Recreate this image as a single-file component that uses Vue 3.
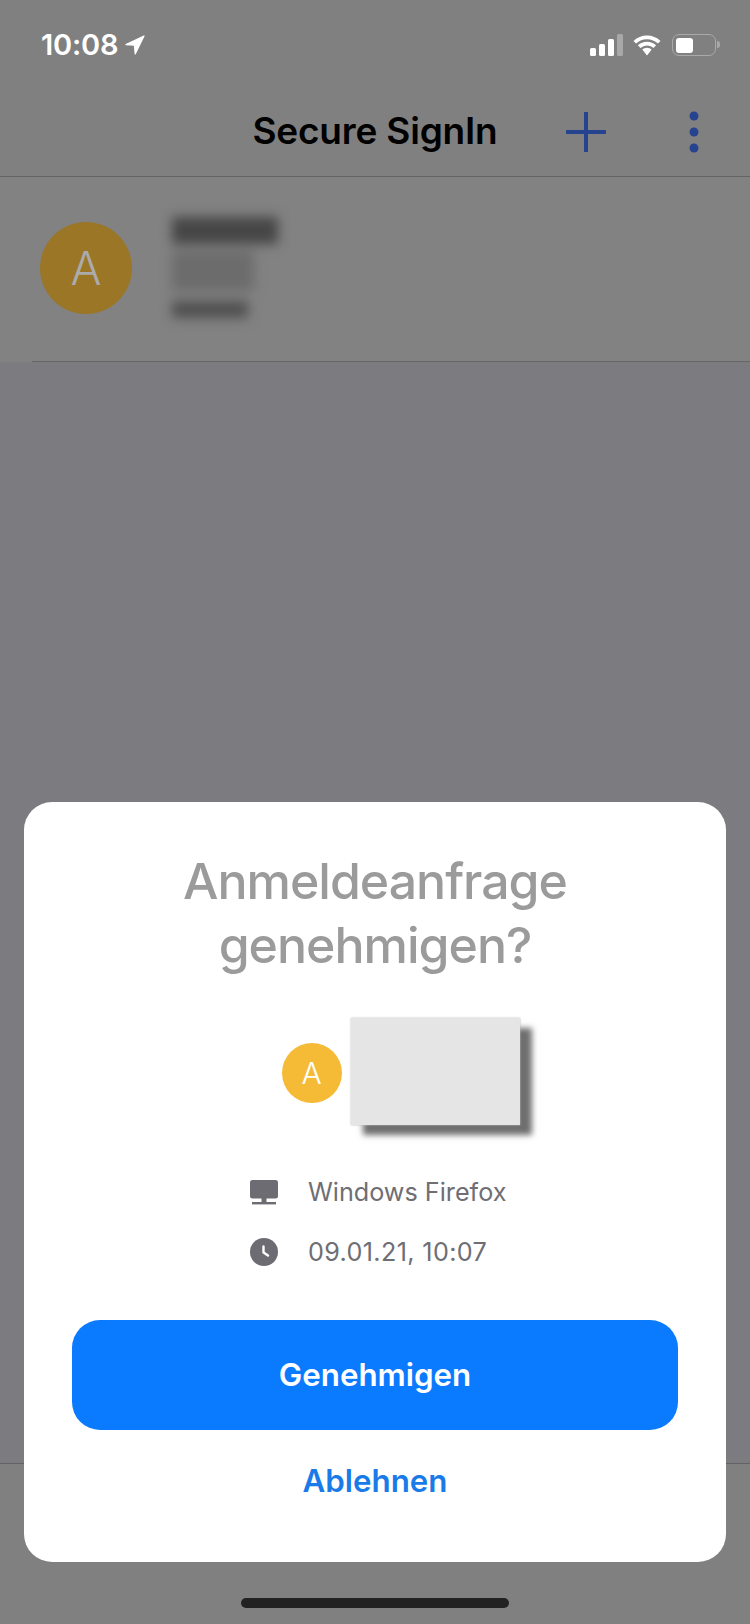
<template>
  <div class="screen">
    <div class="status-bar">
      <div class="time-wrap">
        <span class="time">10:08</span>
        <svg class="loc" viewBox="0 0 20 20" width="20" height="20">
          <path d="M19 1 1 9.6l8.4.6.8 8.8z" fill="#fff" stroke="#fff" stroke-width="1.2" stroke-linejoin="round"/>
        </svg>
      </div>
      <div class="status-icons">
        <svg viewBox="0 0 34 22" width="34" height="22">
          <rect x="0" y="14" width="6" height="8" rx="1.5" fill="#fff"/>
          <rect x="9" y="10" width="6" height="12" rx="1.5" fill="#fff"/>
          <rect x="18" y="5" width="6" height="17" rx="1.5" fill="#fff"/>
          <rect x="27" y="0" width="6" height="22" rx="1.5" fill="#a8a8a8"/>
        </svg>
        <svg viewBox="0 0 30 21" width="30" height="21">
          <path d="M15 4.2c4.2 0 8 1.6 10.9 4.3L28.5 6A19.4 19.4 0 0 0 15 .5 19.4 19.4 0 0 0 1.5 6l2.6 2.5A15.8 15.8 0 0 1 15 4.2z" fill="#fff"/>
          <path d="M15 10.4c2.5 0 4.8 1 6.5 2.5l2.6-2.6A13.2 13.2 0 0 0 15 6.7c-3.5 0-6.7 1.4-9.1 3.6l2.6 2.6a9.6 9.6 0 0 1 6.5-2.5z" fill="#fff"/>
          <path d="M15 12.8c-1.8 0-3.4.7-4.7 1.8L15 20.5l4.7-5.9a7 7 0 0 0-4.7-1.8z" fill="#fff"/>
        </svg>
        <div class="battery">
          <div class="battery-fill"></div>
          <div class="battery-nub"></div>
        </div>
      </div>
    </div>

    <header class="nav">
      <h1 class="nav-title">Secure SignIn</h1>
      <div class="nav-actions">
        <svg viewBox="0 0 40 40" width="40" height="40">
          <path d="M20 1v38M1 20h38" stroke="#26438f" stroke-width="4" stroke-linecap="round" fill="none"/>
        </svg>
        <svg viewBox="0 0 10 42" width="10" height="42">
          <circle cx="5" cy="5" r="4.5" fill="#26438f"/>
          <circle cx="5" cy="21" r="4.5" fill="#26438f"/>
          <circle cx="5" cy="37" r="4.5" fill="#26438f"/>
        </svg>
      </div>
    </header>

    <div class="account">
      <div class="avatar">A</div>
      <div class="blurred">
        <div class="blur-a"></div>
        <div class="blur-b"></div>
        <div class="blur-c"></div>
      </div>
    </div>

    <div class="empty"></div>
    <div class="tabbar"></div>

    <div class="dialog">
      <h2 class="dialog-title">Anmeldeanfrage<br />genehmigen?</h2>

      <div class="who">
        <div class="who-avatar">A</div>
        <div class="who-card"></div>
      </div>

      <div class="meta">
        <div class="meta-row">
          <svg viewBox="0 0 28 25" width="28" height="25">
            <path d="M2.5 0h23A2.5 2.5 0 0 1 28 2.5V16a2.5 2.5 0 0 1-2.5 2.5h-23A2.5 2.5 0 0 1 0 16V2.5A2.5 2.5 0 0 1 2.5 0z" fill="#6c6c72"/>
            <path d="M11.5 18h5v4h-5z" fill="#6c6c72"/>
            <rect x="2" y="22" width="24" height="2.4" fill="#6c6c72"/>
          </svg>
          <span>Windows Firefox</span>
        </div>
        <div class="meta-row">
          <svg viewBox="0 0 28 28" width="28" height="28">
            <circle cx="14" cy="14" r="14" fill="#6c6c72"/>
            <path d="M13.5 8.5v6l4.5 3" stroke="#fff" stroke-width="2.4" stroke-linecap="round" stroke-linejoin="round" fill="none"/>
          </svg>
          <span class="date">09.01.21, 10:07</span>
        </div>
      </div>

      <button class="approve">Genehmigen</button>
      <button class="decline">Ablehnen</button>
    </div>

    <div class="home-bar"></div>
  </div>
</template>

<script setup>
</script>

<style>
html, body {
  margin: 0;
  background: #7b7b80;
}
</style>

<style scoped>
.screen {
  position: relative;
  width: 750px;
  height: 1624px;
  overflow: hidden;
  display: flex;
  flex-direction: column;
  background: #7b7b80;
  font-family: Inter, "Liberation Sans", sans-serif;
}

.status-bar {
  height: 88px;
  flex: none;
  background: #808080;
  display: flex;
  justify-content: space-between;
  align-items: flex-start;
  padding: 34px 34px 0 41px;
  box-sizing: border-box;
}
.time-wrap {
  display: flex;
  align-items: center;
  gap: 7px;
}
.time {
  color: #fff;
  font-size: 29px;
  line-height: 22px;
  font-weight: 600;
  letter-spacing: -0.2px;
}
.status-icons {
  display: flex;
  align-items: center;
  gap: 8px;
}
.status-icons .battery {
  margin-left: 2px;
}
.battery {
  position: relative;
  width: 44px;
  height: 22px;
  border: 1.5px solid #a9a9a9;
  border-radius: 7px;
  padding: 2.5px;
  box-sizing: border-box;
}
.battery-fill {
  width: 17px;
  height: 100%;
  background: #fff;
  border-radius: 3px;
}
.battery-nub {
  position: absolute;
  right: -5px;
  top: 6px;
  width: 3px;
  height: 7px;
  background: #a8a8a8;
  border-radius: 0 3px 3px 0;
}

.nav {
  position: relative;
  height: 89px;
  flex: none;
  background: #808080;
  border-bottom: 1px solid #636363;
  box-sizing: border-box;
  display: flex;
  align-items: center;
  justify-content: center;
}
.nav-title {
  margin: 0 0 3px;
  color: #000;
  font-size: 37px;
  font-weight: 600;
  letter-spacing: -0.2px;
}
.nav-actions {
  position: absolute;
  top: 23px;
  right: 51px;
  display: flex;
  align-items: center;
  gap: 83px;
}

.account {
  height: 185px;
  flex: none;
  background: #828282;
  display: flex;
  align-items: center;
  padding: 0 0 4px 40px;
  box-sizing: border-box;
  position: relative;
}
.account::after {
  content: "";
  position: absolute;
  left: 32px;
  right: 0;
  bottom: 0;
  height: 1px;
  background: #666;
}
.avatar {
  width: 92px;
  height: 92px;
  border-radius: 50%;
  background: #9a7626;
  color: #ababab;
  font-size: 46px;
  font-weight: 300;
  display: flex;
  align-items: center;
  justify-content: center;
}
.blurred {
  margin-left: 40px;
  display: flex;
  flex-direction: column;
  align-items: flex-start;
  filter: blur(6px);
}
.blur-a {
  width: 106px;
  height: 27px;
  background: #464646;
}
.blur-b {
  width: 82px;
  height: 40px;
  margin-top: 7px;
  background: #6c6c6c;
}
.blur-c {
  width: 76px;
  height: 17px;
  margin-top: 10px;
  background: #505050;
}

.empty {
  flex: 1;
}
.tabbar {
  height: 161px;
  flex: none;
  background: #808080;
  border-top: 1px solid #636363;
  box-sizing: border-box;
}

.dialog {
  position: absolute;
  left: 24px;
  right: 24px;
  top: 802px;
  height: 760px;
  background: #fff;
  border-radius: 28px;
  box-sizing: border-box;
  padding: 47px 48px 0;
  display: flex;
  flex-direction: column;
  align-items: center;
}
.dialog-title {
  margin: 0;
  color: #9b9b9b;
  font-size: 50px;
  line-height: 64px;
  font-weight: 500;
  text-align: center;
  letter-spacing: -1px;
}
.who {
  display: flex;
  align-items: center;
  gap: 9px;
  margin-top: 41px;
  margin-left: 51px;
}
.who-avatar {
  width: 60px;
  height: 60px;
  margin-top: 3px;
  border-radius: 50%;
  background: #f5bb36;
  color: #fff;
  font-size: 30px;
  font-weight: 300;
  display: flex;
  align-items: center;
  justify-content: center;
}
.who-card {
  width: 169px;
  height: 107px;
  background: #e5e5e5;
  box-shadow: 0 0 2px #bbb, 12px 10px 6px #6f6f6f;
}
.meta {
  align-self: flex-start;
  margin-top: 53px;
  margin-left: 178px;
  display: flex;
  flex-direction: column;
  gap: 32px;
}
.meta-row {
  display: flex;
  align-items: center;
  gap: 30px;
  height: 28px;
  color: #6e6e73;
  font-size: 25.2px;
}
.date {
  letter-spacing: 0.35px;
}
.approve {
  margin-top: 54px;
  width: 606px;
  height: 110px;
  flex: none;
  border: none;
  border-radius: 28px;
  background: #0a7aff;
  color: #fff;
  font-family: inherit;
  font-size: 31.3px;
  font-weight: 600;
}
.decline {
  margin-top: 25px;
  border: none;
  background: none;
  padding: 0;
  height: 52px;
  color: #1a7be8;
  font-family: inherit;
  font-size: 31.3px;
  font-weight: 600;
}

.home-bar {
  position: absolute;
  left: 241px;
  top: 1598px;
  width: 268px;
  height: 10px;
  border-radius: 5px;
  background: #222;
}
</style>
